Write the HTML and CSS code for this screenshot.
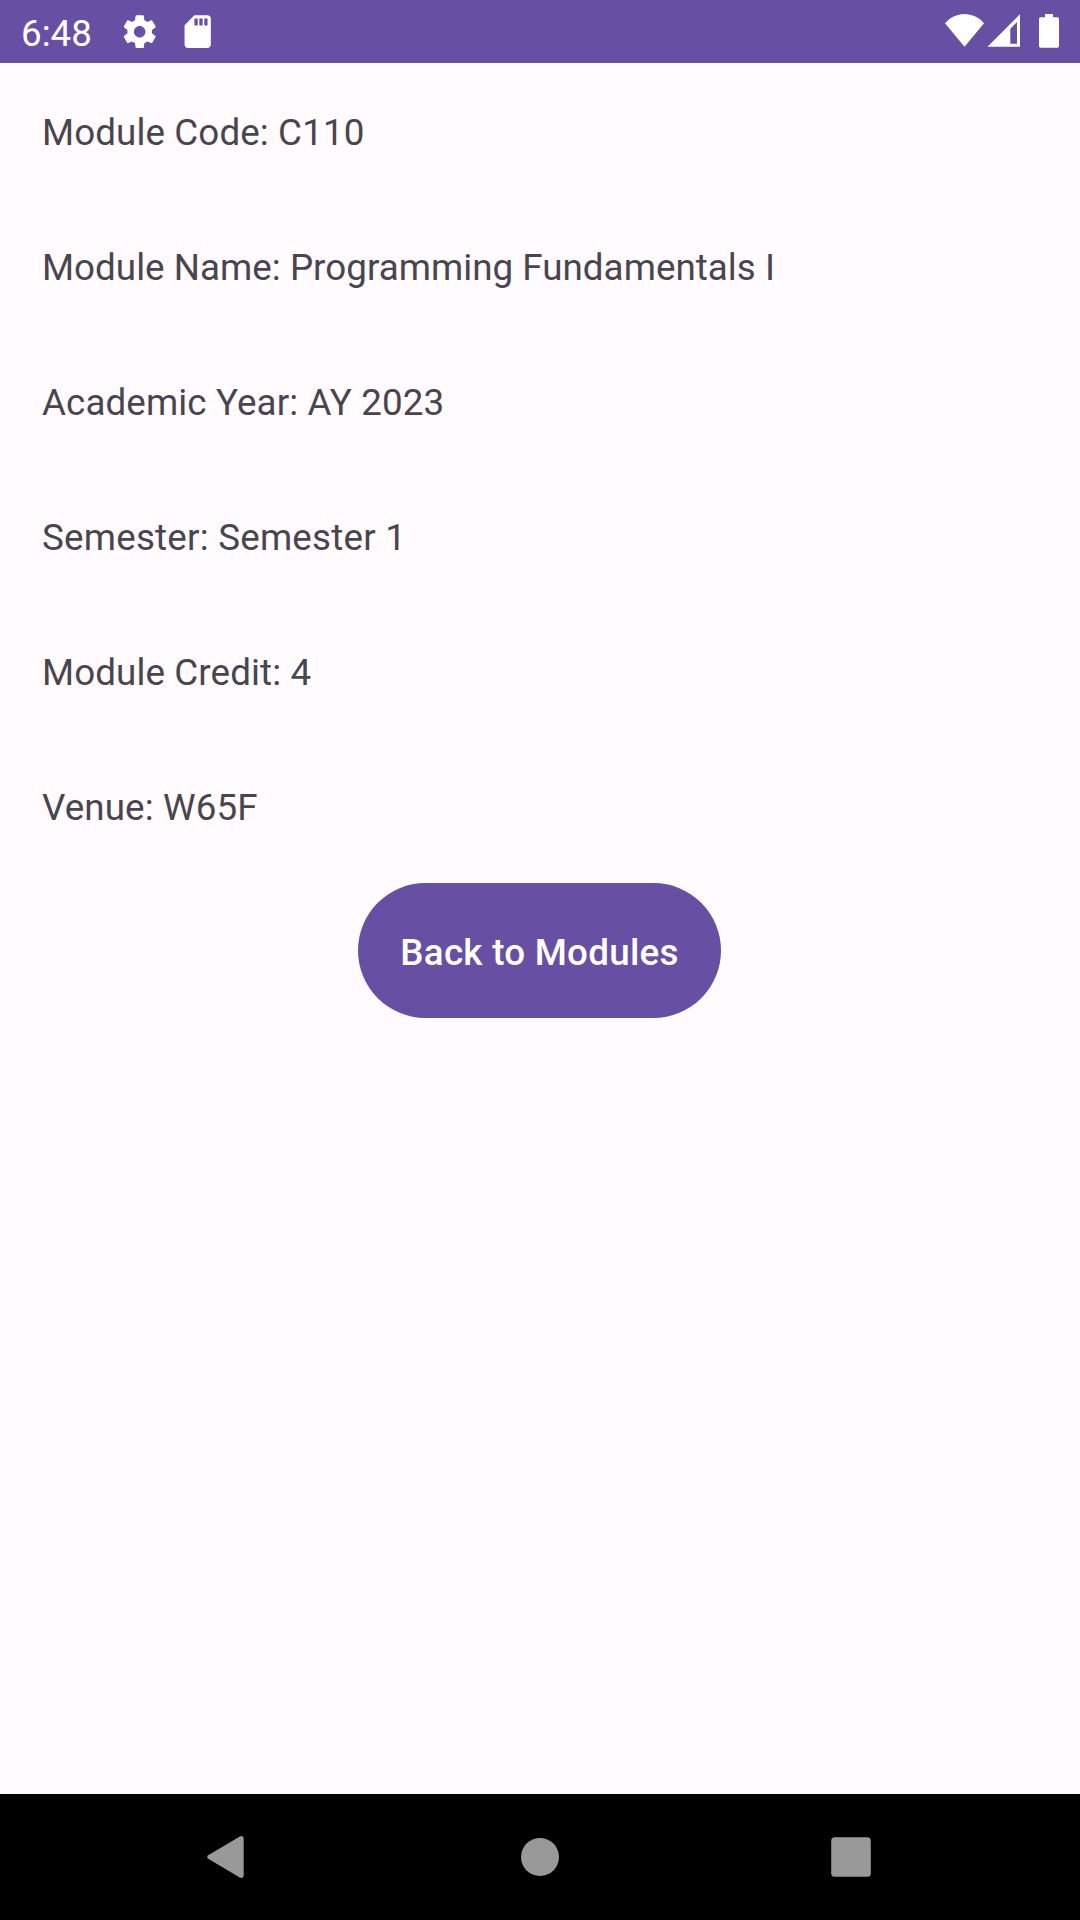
FILE: index.html
```html
<!DOCTYPE html>
<html lang="en">
<head>
<meta charset="utf-8">
<title>Module Details</title>
<link rel="stylesheet" href="styles.css">
</head>
<body>
<div class="screen">
  <header class="status-bar">
    <span class="clock">6:48</span>
    <svg class="icon-settings" viewBox="0 0 24 24"><path d="M19.43 12.98c.04-.32.07-.64.07-.98s-.03-.66-.07-.98l2.11-1.65c.19-.15.24-.42.12-.64l-2-3.46c-.12-.22-.39-.3-.61-.22l-2.49 1c-.52-.4-1.08-.73-1.69-.98l-.38-2.65C14.46 2.18 14.25 2 14 2h-4c-.25 0-.46.18-.49.42l-.38 2.65c-.61.25-1.17.59-1.69.98l-2.49-1c-.23-.09-.49 0-.61.22l-2 3.46c-.13.22-.07.49.12.64l2.11 1.65c-.04.32-.07.65-.07.98s.03.66.07.98l-2.11 1.65c-.19.15-.24.42-.12.64l2 3.46c.12.22.39.3.61.22l2.49-1c.52.4 1.08.73 1.69.98l.38 2.65c.03.24.24.42.49.42h4c.25 0 .46-.18.49-.42l.38-2.65c.61-.25 1.17-.59 1.69-.98l2.49 1c.23.09.49 0 .61-.22l2-3.46c.12-.22.07-.49-.12-.64l-2.11-1.65zM12 15.5c-1.93 0-3.5-1.57-3.5-3.5s1.57-3.5 3.5-3.5 3.5 1.57 3.500 3.500-1.570 3.500-3.500 3.500z"/></svg>
    <svg class="icon-sd" viewBox="0 0 24 24"><path d="M18 2h-8L4 8v12c0 1.100.9 2 2 2h12c1.100 0 2-.9 2-2V4c0-1.100-.9-2-2-2zm-6 6.300h-2V4h2v4.300zm3 0h-2V4h2v4.300zm3 0h-2V4h2v4.300z"/></svg>
    <svg class="system-icons" viewBox="0 0 120 34"><path d="M19.500 32.700 0 9.200C5 3.500 12 0 19.500 0S34 3.500 39 9.200z"/><path fill-rule="evenodd" d="M42.500 32.700 75 .2v32.500zM65.300 29.800h6.700V8l-6.700 6.700z"/><path d="M100 0h8v3.300h4.300q1.700 0 1.700 1.700v27q0 1.700-1.700 1.700H95.700Q94 33.700 94 32V5q0-1.700 1.700-1.700h4.300z"/></svg>
  </header>
  <main class="content">
    <p class="field">Module Code: C110</p>
    <p class="field field-name">Module Name: Programming Fundamentals I</p>
    <p class="field">Academic Year: AY 2023</p>
    <p class="field field-semester">Semester: Semester 1</p>
    <p class="field">Module Credit: 4</p>
    <p class="field">Venue: W65F</p>
    <button class="back-button" type="button">Back to Modules</button>
  </main>
  <nav class="nav-bar">
    <svg class="nav-icon" viewBox="0 0 44 44"><path d="M1.200 20.200 32.800 1.400Q36.400.2 36.700 3.500v37Q36.400 43.800 32.800 42.600L1.200 23.800Q-.8 22 1.200 20.200z"/></svg>
    <svg class="nav-icon" viewBox="0 0 44 44"><circle cx="22" cy="22" r="19"/></svg>
    <svg class="nav-icon" viewBox="0 0 44 44"><rect x="2.200" y="2.200" width="39.600" height="39.600" rx="3.500"/></svg>
  </nav>
</div>
</body>
</html>
```
FILE: styles.css
```css
body {
  margin: 0;
  font-family: Roboto, sans-serif;
}

.screen {
  display: flex;
  flex-direction: column;
  width: 1080px;
  height: 1920px;
  background: #fffbfe;
}

.status-bar {
  display: flex;
  height: 63px;
  background: #6750a4;
  color: #fff;
}

.status-bar svg {
  display: block;
  flex: none;
  fill: #fff;
}

.clock {
  width: 99px;
  padding-left: 21px;
  font-size: 36.75px;
  line-height: 68px;
}

.icon-settings,
.icon-sd {
  width: 39.4px;
  height: 39.4px;
  margin-top: 12px;
}

.icon-sd {
  margin-left: 19px;
}

.system-icons {
  width: 120px;
  height: 34px;
  margin: 14px 15px 0 auto;
}

.content {
  display: flex;
  flex: 1;
  flex-direction: column;
  align-items: center;
}

.field {
  box-sizing: border-box;
  width: 100%;
  height: 135px;
  margin: 0;
  padding: 0 42px;
  color: #49454f;
  font-size: 36.75px;
  line-height: 139px;
  letter-spacing: 0.11px;
}

.field-name {
  letter-spacing: 0.03px;
}

.field-semester {
  letter-spacing: 0.22px;
}

.back-button {
  width: 363px;
  height: 135px;
  margin: 10px 1px 0 0;
  padding: 4px 0 0;
  border: 0;
  border-radius: 68px;
  background: #6750a4;
  color: #fff;
  font: 500 36.75px Roboto, sans-serif;
  letter-spacing: 0.26px;
  white-space: nowrap;
}

.nav-bar {
  display: flex;
  align-items: center;
  justify-content: center;
  gap: 267px;
  height: 126px;
  background: #000;
}

.nav-icon {
  width: 44px;
  height: 44px;
  fill: #999;
}
```
